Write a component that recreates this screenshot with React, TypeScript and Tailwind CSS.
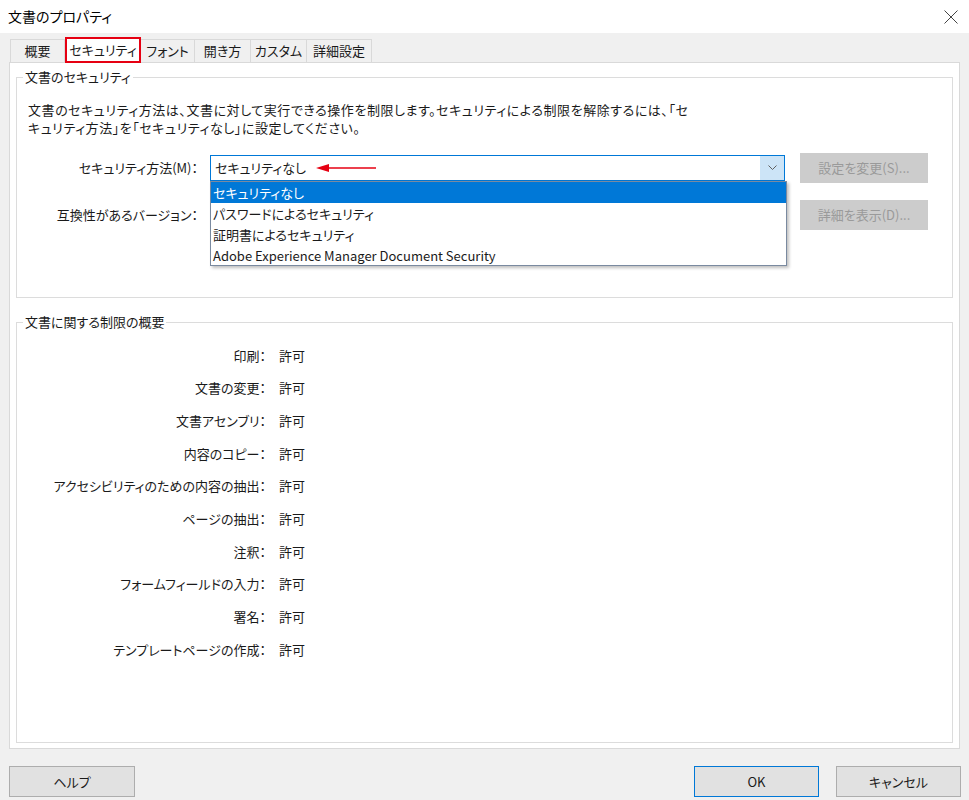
const tabs = ["概要", "セキュリティ", "フォント", "開き方", "カスタム", "詳細設定"];
const tabWidths = ["w-[55px]", "w-[76px]", "w-[55px]", "w-[57px]", "w-[57px]", "w-[66px]"];

const summary = [
  "印刷",
  "文書の変更",
  "文書アセンブリ",
  "内容のコピー",
  "アクセシビリティのための内容の抽出",
  "ページの抽出",
  "注釈",
  "フォームフィールドの入力",
  "署名",
  "テンプレートページの作成",
];

const options = [
  "セキュリティなし",
  "パスワードによるセキュリティ",
  "証明書によるセキュリティ",
  "Adobe Experience Manager Document Security",
];

const RedArrow = () => (
  <svg width="62" height="10" viewBox="0 0 62 10" className="ml-[10px]">
    <line x1="8" y1="5" x2="60" y2="5" stroke="#e60012" strokeWidth="1.6" />
    <polygon points="0,5 13,1 13,9" fill="#e60012" />
  </svg>
);

const App = () => {
  return (
    <div className="w-[969px] h-[800px] bg-[#f0f0f0] text-[13px] text-[#1a1a1a] font-['Noto_Sans_CJK_JP',sans-serif] [font-feature-settings:'palt'] overflow-hidden">
      {/* title bar */}
      <div className="h-[33px] bg-white flex items-center justify-between pl-[8px] pr-[11px]">
        <span className="text-[14px] text-black">文書のプロパティ</span>
        <svg width="14" height="14" viewBox="0 0 14 14">
          <line x1="0.5" y1="0.5" x2="13.5" y2="13.5" stroke="#444" strokeWidth="1" />
          <line x1="13.5" y1="0.5" x2="0.5" y2="13.5" stroke="#444" strokeWidth="1" />
        </svg>
      </div>

      {/* tabs */}
      <div className="flex items-end h-[29px] pl-[10px]">
        {tabs.map((t, i) =>
          i === 1 ? (
            <div
              key={t}
              className={`${tabWidths[i]} h-[26px] mb-[-1px] bg-white border-2 border-[#e60012] flex items-center justify-center relative z-10`}
            >
              {t}
            </div>
          ) : (
            <div
              key={t}
              className={`${tabWidths[i]} h-[23px] border border-b-0 border-[#d9d9d9] -ml-px first:ml-0 flex items-center justify-center`}
            >
              {t}
            </div>
          )
        )}
      </div>

      {/* panel */}
      <div className="ml-[9px] w-[951px] h-[687px] bg-white border border-[#d9d9d9] px-[6px] pt-[5px]">
        <fieldset className="border border-[#dcdcdc] h-[230px]">
          <legend className="ml-[6px] px-[2px] leading-[18px]">文書のセキュリティ</legend>
          <p className="pl-[11px] pt-[15px] leading-[18px] whitespace-nowrap tracking-[0.55px]">
            文書のセキュリティ方法は、文書に対して実行できる操作を制限します。セキュリティによる制限を解除するには、「セ
            <br />
            キュリティ方法」を「セキュリティなし」に設定してください。
          </p>

          <div className="flex items-center h-[30px] mt-[16px]">
            <div className="w-[181px] text-right whitespace-nowrap">セキュリティ方法(M)：</div>
            <div className="ml-[12px] w-[575px] h-[26px] border border-[#0078d7] flex relative">
              <div className="flex-1 flex items-center pl-[4px]">
                <span>セキュリティなし</span>
                <RedArrow />
              </div>
              <div className="w-[24px] bg-[#cce4f7] flex items-center justify-center">
                <svg width="9" height="6" viewBox="0 0 9 6">
                  <polyline points="0.5,0.5 4.5,4.5 8.5,0.5" fill="none" stroke="#606060" strokeWidth="1" />
                </svg>
              </div>
              <div className="absolute left-[-1px] top-[25px] w-[577px] h-[85px] bg-white border border-[#7a8aa0] shadow-[2px_2px_3px_rgba(0,0,0,0.25)] z-20">
                {options.map((o, i) => (
                  <div
                    key={o}
                    className={`h-[21px] leading-[21px] pl-[2px] whitespace-nowrap ${
                      i === 0 ? "bg-[#0078d7] text-white" : ""
                    }`}
                  >
                    {o}
                  </div>
                ))}
              </div>
            </div>
            <div className="ml-[15px] w-[128px] h-[30px] bg-[#cccccc] text-[#9a9a9a] flex items-center justify-center">
              設定を変更(S)...
            </div>
          </div>

          <div className="flex items-center h-[30px] mt-[17px]">
            <div className="w-[181px] text-right whitespace-nowrap">互換性があるバージョン：</div>
            <div className="ml-[12px] w-[575px]" />
            <div className="ml-[15px] w-[128px] h-[30px] bg-[#cccccc] text-[#9a9a9a] flex items-center justify-center">
              詳細を表示(D)...
            </div>
          </div>
        </fieldset>

        <fieldset className="border border-[#dcdcdc] h-[430px] mt-[15px]">
          <legend className="ml-[6px] px-[2px] leading-[18px]">文書に関する制限の概要</legend>
          <div className="pt-[8px]">
            {summary.map((s) => (
              <div key={s} className="flex items-center h-[32.7px]">
                <div className="w-[249px] text-right whitespace-nowrap">{s}：</div>
                <div className="ml-[13px]">許可</div>
              </div>
            ))}
          </div>
        </fieldset>
      </div>

      {/* footer buttons */}
      <div className="flex items-center justify-between pl-[9px] pr-[8px] mt-[17px]">
        <div className="w-[126px] h-[31px] bg-[#e1e1e1] border border-[#adadad] flex items-center justify-center">
          ヘルプ
        </div>
        <div className="flex gap-[17px]">
          <div className="w-[125px] h-[31px] bg-[#e1e1e1] border border-[#0078d7] flex items-center justify-center">
            OK
          </div>
          <div className="w-[125px] h-[31px] bg-[#e1e1e1] border border-[#adadad] flex items-center justify-center">
            キャンセル
          </div>
        </div>
      </div>
    </div>
  );
};

export default App;
